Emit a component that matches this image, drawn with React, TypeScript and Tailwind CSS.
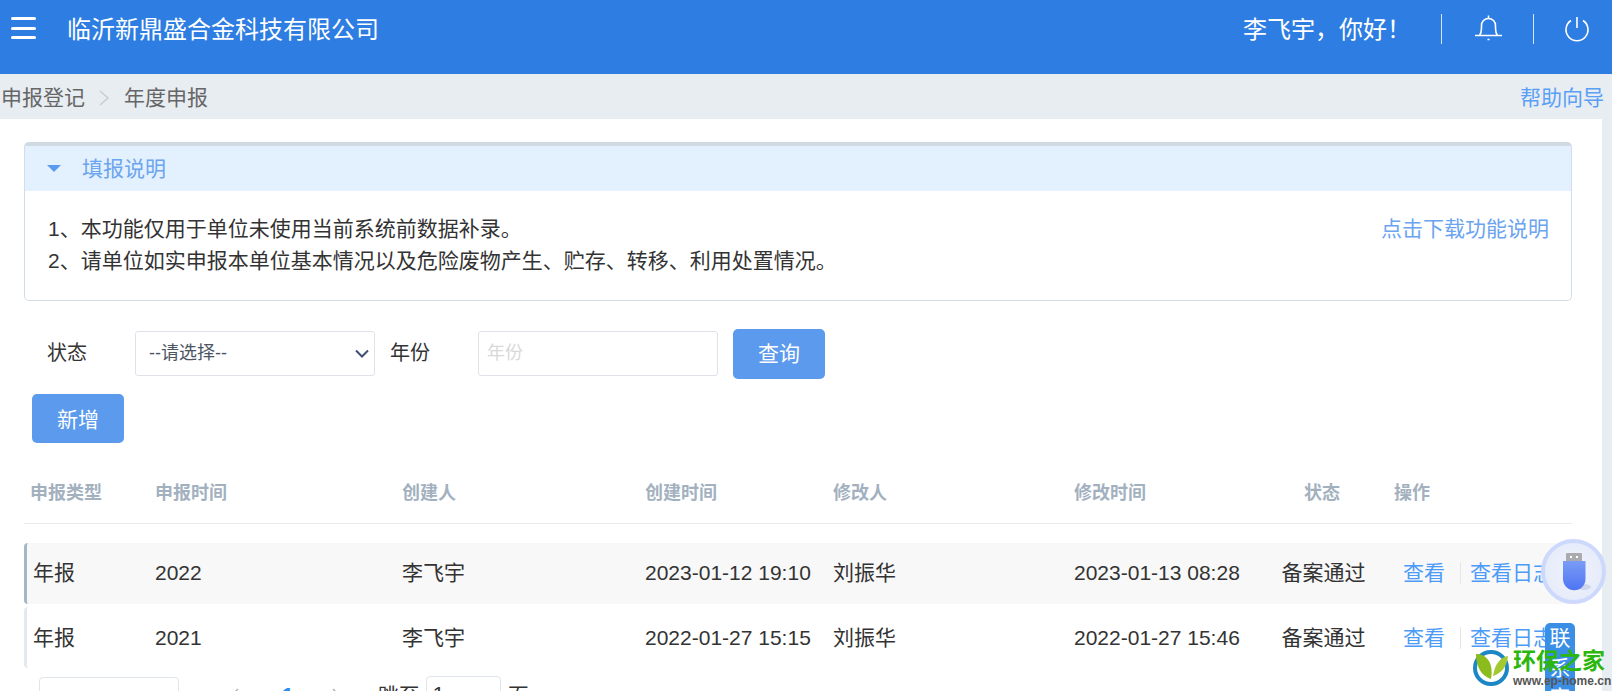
import React from "react";

const FONT = "font-['Liberation_Sans','Noto_Sans_CJK_SC',sans-serif]";
const COLS = "grid grid-cols-[131px_247px_243px_188px_241px_186px_124px_1fr] items-center";

const rows = [
  { type: "年报", year: "2022", creator: "李飞宇", created: "2023-01-12 19:10", editor: "刘振华", edited: "2023-01-13 08:28", bg: "bg-[#f8f8f8] pb-[2px]", border: "border-l-[#a3b7c8]" },
  { type: "年报", year: "2021", creator: "李飞宇", created: "2022-01-27 15:15", editor: "刘振华", edited: "2022-01-27 15:46", bg: "bg-white", border: "border-l-[#e3e9f0]" },
];

function UsbBall() {
  return (
    <div className="absolute left-[1541px] top-[539px] flex h-[65px] w-[65px] items-center justify-center rounded-full border-[4px] border-[#cdd9fc] bg-[radial-gradient(circle,#f0f3fb_0%,#e3e9fa_100%)]">
      <svg width="34" height="40" viewBox="-3 0 34 40">
        <defs>
          <linearGradient id="usbBody" x1="0" y1="0" x2="0" y2="1">
            <stop offset="0" stopColor="#7a9cf6" />
            <stop offset="1" stopColor="#4f74f3" />
          </linearGradient>
        </defs>
        <ellipse cx="24" cy="35" rx="7" ry="3" fill="#cfd6ea" />
        <rect x="6" y="1" width="16" height="9" rx="1" fill="#a9abaf" />
        <rect x="10" y="4" width="2" height="2" fill="#fff" />
        <rect x="16" y="4" width="2" height="2" fill="#fff" />
        <path d="M3 9h22.500v18a11.250 11.250 0 0 1-22.500 0z" fill="url(#usbBody)" />
      </svg>
    </div>
  );
}

function Watermark() {
  return (
    <div className="absolute left-[1472px] top-[648px] flex items-start gap-[3px]">
      <svg width="38" height="40" viewBox="0 0 38 40">
        <circle cx="19" cy="20" r="16" fill="none" stroke="#1c87c4" strokeWidth="4" />
        <path d="M4 6C14 6 22 14 19 31 9 28 4 18 4 6z" fill="#8cbb1e" />
        <path d="M36 8C30 9 23 14 21 28 30 25 35 18 36 8z" fill="#a3c832" />
      </svg>
      <div className="flex flex-col whitespace-nowrap">
        <span className="text-[23px] leading-[26px] font-bold text-[#2cb60e]">环保之家</span>
        <span className="text-[12px] leading-[14px] font-bold text-[#555]">www.ep-home.cn</span>
      </div>
    </div>
  );
}

function Chevron({ dir, className }: { dir: "left" | "right"; className: string }) {
  return (
    <svg width="9" height="16" viewBox="0 0 9 16" fill="none" stroke="#b5b5b5" strokeWidth="1.500" className={className}>
      <path d={dir === "left" ? "M8 1L1 8l7 7" : "M1 1l7 7-7 7"} />
    </svg>
  );
}

export default function App() {
  return (
    <div className={`${FONT} relative h-[691px] w-full overflow-hidden bg-[#e8edf2]`}>
      <header className="flex h-[74px] items-start bg-[#2d7de2] text-white">
        <button className="mt-[16px] ml-[11px] flex h-[24px] w-[25px] flex-col justify-between py-[1px]">
          <span className="h-[3px] w-full rounded-sm bg-white" />
          <span className="h-[3px] w-full rounded-sm bg-white" />
          <span className="h-[3px] w-full rounded-sm bg-white" />
        </button>
        <div className="ml-[31px] mt-[13px] text-[24px] leading-[34px]">临沂新鼎盛合金科技有限公司</div>
        <div className="ml-auto mt-[14px] flex items-start">
          <div className="text-[24px] leading-[32px]">李飞宇，你好！</div>
          <div className="ml-[30px] h-[30px] w-px bg-white/80" />
          <svg width="28" height="30" viewBox="0 0 28 30" fill="none" stroke="#fff" strokeWidth="1.6" className="ml-[32px]">
            <path d="M1 21.500h27M5.500 21.500c1.500-2 2-4 2-7.500v-2.500c0-4 3-7 7-7s7 3 7 7v2.500c0 3.500.5 5.500 2 7.500" />
            <path d="M14.500 4V1.500M13.500 25.500h2" />
          </svg>
          <div className="ml-[31px] h-[30px] w-px bg-white/80" />
          <svg width="26" height="26" viewBox="0 0 26 26" fill="none" stroke="#fff" strokeWidth="1.6" className="ml-[30px] mr-[22px] mt-[2px]">
            <path d="M7 4.500a11 11 0 1 0 12 0M13 1v11" />
          </svg>
        </div>
      </header>

      <div className="flex h-[45px] items-center pt-[2px] text-[21px] text-[#666]">
        <span className="ml-[1px]">申报登记</span>
        <svg width="14" height="18" viewBox="0 0 14 18" fill="none" stroke="#c8ccd0" strokeWidth="1.500" className="ml-[12px] mr-[13px]">
          <path d="M3 2l8 7-8 7" />
        </svg>
        <span>年度申报</span>
        <span className="ml-auto mr-[8px] text-[#5a9ff5]">帮助向导</span>
      </div>

      <main className="mr-[10px] h-[572px] overflow-hidden bg-white pt-[23px] pl-[24px] pr-[30px] text-[21px] text-[#333]">
        <section className="h-[159px] rounded-[5px] border border-t-[4px] border-[#d3dde6] border-t-[#d0dae2]">
          <div className="flex h-[45px] items-center bg-[#e3f0fe] text-[#6ba4ef]">
            <span className="ml-[22px] h-0 w-0 border-x-[7px] border-t-[7px] border-x-transparent border-t-[#5b9aee]" />
            <span className="ml-[21px]">填报说明</span>
          </div>
          <div className="flex items-start justify-between pt-[22px] pl-[23px] pr-[22px] leading-[32px]">
            <div>
              <p>1、本功能仅用于单位未使用当前系统前数据补录。</p>
              <p>2、请单位如实申报本单位基本情况以及危险废物产生、贮存、转移、利用处置情况。</p>
            </div>
            <span className="text-[#6ba4ef]">点击下载功能说明</span>
          </div>
        </section>

        <div className="mt-[28px] flex items-start">
          <label className="mt-[4px] ml-[23px] w-[88px] text-[20px] leading-[40px]">状态</label>
          <div className="relative mt-[2px] flex h-[45px] w-[240px] items-center rounded-[3px] border border-[#e0e2ea] pl-[13px] text-[18px] text-[#4b5563]">
            --请选择--
            <svg width="16" height="10" viewBox="0 0 16 10" fill="none" stroke="#3f4f72" strokeWidth="2" className="absolute right-[4px] top-[17px]">
              <path d="M2 1.500l6 6 6-6" />
            </svg>
          </div>
          <label className="mt-[4px] ml-[15px] w-[88px] text-[20px] leading-[40px]">年份</label>
          <div className="mt-[2px] flex h-[45px] w-[240px] items-center rounded-[3px] border border-[#e0e2ea] pl-[8px] text-[18px] text-[#d8d8d8]">年份</div>
          <button className="ml-[15px] h-[50px] w-[92px] rounded-[5px] bg-[#5b9aec] text-[21px] text-white">查询</button>
        </div>

        <button className="mt-[15px] ml-[8px] block h-[49px] w-[92px] rounded-[5px] bg-[#5b9aec] pt-[2px] text-[21px] text-white">新增</button>

        <div className={`${COLS} mt-[29px] h-[52px] border-b border-[#e9ecef] pb-[8px] text-[18px] font-bold text-[#a3b1bf]`}>
          <span className="pl-[6px]">申报类型</span>
          <span>申报时间</span>
          <span>创建人</span>
          <span>创建时间</span>
          <span>修改人</span>
          <span>修改时间</span>
          <span className="text-center">状态</span>
          <span className="pl-[10px]">操作</span>
        </div>

        <div className="mt-[19px] flex flex-col gap-[3px]">
          {rows.map((r) => (
            <div key={r.year} className={`${COLS} ${r.bg} ${r.border} h-[61px] rounded-l-[4px] border-l-[3px]`}>
              <span className="pl-[6px]">{r.type}</span>
              <span className="-ml-[3px]">{r.year}</span>
              <span className="-ml-[3px]">{r.creator}</span>
              <span className="-ml-[3px]">{r.created}</span>
              <span className="-ml-[3px]">{r.editor}</span>
              <span className="-ml-[3px]">{r.edited}</span>
              <span className="-ml-[3px] text-center">备案通过</span>
              <div className="flex items-center pl-[16px] text-[#4d9bf8]">
                <span>查看</span>
                <span className="ml-[15px] mr-[9px] h-[22px] w-px bg-[#e6e6e6]" />
                <span className="whitespace-nowrap">查看日志</span>
              </div>
            </div>
          ))}
        </div>

        <div className="mt-[9px] ml-[15px] flex items-start">
          <div className="h-[40px] w-[140px] rounded-[4px] border border-[#dfe5ea] pt-[11px] pl-[44px] text-[16px] text-[#555]">10 条/页</div>
          <Chevron dir="left" className="ml-[51px] mt-[11px]" />
          <span className="ml-[43px] pt-[2px] font-bold text-[#2d8cf0]">1</span>
          <Chevron dir="right" className="ml-[38px] mt-[11px]" />
          <span className="ml-[37px] pt-[3px]">跳至</span>
          <div className="-mt-[1px] ml-[6px] h-[40px] w-[75px] rounded-[4px] border border-[#dfe5ea] pl-[6px] pt-[1px]">1</div>
          <span className="ml-[7px] pt-[3px]">页</span>
        </div>
      </main>

      <div className="absolute left-[1545px] top-[623px] h-[90px] w-[30px] rounded-t-[5px] bg-[#3a8ee6] text-center text-[21px] leading-[30px] text-white">
        联<br />系<br />客<br />服
      </div>
      <UsbBall />
      <Watermark />
    </div>
  );
}
